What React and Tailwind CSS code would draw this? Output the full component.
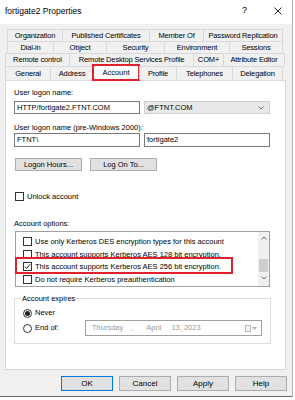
import React from 'react'

const tabRows = [
  { ml: 'ml-[7px]', h: 'h-[12px]', tabs: [['Organization', 'w-[55px]'], ['Published Certificates', 'w-[87px]'], ['Member Of', 'w-[54px]'], ['Password Replication', 'w-[80px]']] },
  { ml: 'ml-[7px]', h: 'h-[12px]', tabs: [['Dial-in', 'w-[46px]'], ['Object', 'w-[53px]'], ['Security', 'w-[58px]'], ['Environment', 'w-[65px]'], ['Sessions', 'w-[54px]']] },
  { ml: 'ml-[5px]', h: 'h-[13px]', tabs: [['Remote control', 'w-[64px]'], ['Remote Desktop Services Profile', 'w-[124px]'], ['COM+', 'w-[30px]'], ['Attribute Editor', 'w-[62px]']] },
]

const lastRow = [['General', 'w-[45px]'], ['Address', 'w-[43px]'], ['Account', 'w-[48px]'], ['Profile', 'w-[37px]'], ['Telephones', 'w-[56px]'], ['Delegation', 'w-[51px]']]

function Check({ checked }) {
  return (
    <span className="w-[9px] h-[9px] border border-[#333] bg-white flex items-center justify-center shrink-0">
      {checked && (
        <svg width="7" height="7" viewBox="0 0 7 7">
          <path d="M0.8 3.6 L2.7 5.4 L6.2 1.2" fill="none" stroke="#222" strokeWidth="1" />
        </svg>
      )}
    </span>
  )
}

function Radio({ on }) {
  return (
    <span className="w-[9px] h-[9px] rounded-full border border-[#333] bg-white flex items-center justify-center shrink-0">
      {on && <span className="w-[5px] h-[5px] rounded-full bg-[#222]" />}
    </span>
  )
}

export default function App() {
  return (
    <div className="w-[295px] h-[400px] bg-white overflow-hidden font-['Liberation_Sans',Arial,sans-serif] text-[7.5px] text-black">
      <div className="w-[293px] h-[397px] bg-[#f0f0f0] border-r border-b border-r-[#b4b4b4] border-b-[#6e6e6e] flex flex-col">

        {/* Title bar */}
        <div className="h-[24px] bg-white flex items-center shrink-0">
          <span className="ml-[5px] text-[8.5px] -mt-[2px]">fortigate2 Properties</span>
          <span className="ml-auto text-[9px] -mt-[2px]">?</span>
          <svg className="ml-[27px] mr-[10px] -mt-[2px]" width="8" height="8" viewBox="0 0 8 8">
            <path d="M0.5 0.5 L7.5 7.5 M7.5 0.5 L0.5 7.5" stroke="#111" strokeWidth="0.9" />
          </svg>
        </div>

        {/* Tabs */}
        <div className="mt-[5px] flex flex-col">
          {tabRows.map((row, i) => (
            <div key={i} className={`flex ${row.ml} ${row.h}`}>
              {row.tabs.map(([t, w]) => (
                <div key={t} className={`${w} h-full border-t border-l border-[#d9d9d9] last:border-r flex items-center justify-center whitespace-nowrap tracking-[-0.15px]`}>
                  {t}
                </div>
              ))}
            </div>
          ))}
          <div className="flex ml-[5px] h-[14px] relative z-10">
            {lastRow.map(([t, w]) =>
              t === 'Account' ? (
                <div key={t} className={`${w} h-[17px] -mt-[2px] -mx-px bg-white border-2 border-[#e0202a] flex items-center justify-center whitespace-nowrap`}>
                  {t}
                </div>
              ) : (
                <div key={t} className={`${w} h-full border-t border-l border-[#d9d9d9] last:border-r flex items-center justify-center whitespace-nowrap tracking-[-0.15px]`}>
                  {t}
                </div>
              )
            )}
          </div>
        </div>

        {/* Panel */}
        <div className="ml-[5px] w-[281px] h-[290px] bg-white border border-[#d9d9d9] flex flex-col pl-[8px] shrink-0">
          <div className="mt-[7px] h-[9px] leading-[9px]">User logon name:</div>
          <div className="mt-[4px] flex gap-[4px] h-[13px]">
            <div className="w-[126px] h-full border border-[#7a7a7a] flex items-center pl-[2px]">HTTP/fortigate2.FTNT.COM</div>
            <div className="w-[126px] h-full border border-[#cfcfcf] bg-[#e9e9e9] flex items-center pl-[2px]">
              <span>@FTNT.COM</span>
              <svg className="ml-auto mr-[5px]" width="6" height="4" viewBox="0 0 6 4">
                <path d="M0.5 0.5 L3 3 L5.5 0.5" fill="none" stroke="#555" strokeWidth="0.8" />
              </svg>
            </div>
          </div>
          <div className="mt-[9px] h-[9px] leading-[9px]">User logon name (pre-Windows 2000):</div>
          <div className="mt-[1px] flex gap-[4px] h-[14px]">
            <div className="w-[126px] h-full border border-[#7a7a7a] flex items-center pl-[2px]">FTNT\</div>
            <div className="w-[126px] h-full border border-[#7a7a7a] flex items-center pl-[2px]">fortigate2</div>
          </div>
          <div className="mt-[11px] flex gap-[8px] h-[13px] ml-[1px]">
            <div className="w-[67px] h-full bg-[#e1e1e1] border border-[#adadad] flex items-center justify-center">Logon Hours...</div>
            <div className="w-[67px] h-full bg-[#e1e1e1] border border-[#adadad] flex items-center justify-center">Log On To...</div>
          </div>

          <div className="mt-[21px] flex items-center gap-[3px] ml-[1px] h-[9px]">
            <Check />
            <span>Unlock account</span>
          </div>

          <div className="mt-[18px] h-[9px] leading-[9px]">Account options:</div>
          <div className="mt-[3px] w-[255px] h-[56px] border border-[#a0a0a0] ml-[1px] flex relative">
            <div className="flex-1 flex flex-col pt-[3px] pl-[7px]">
              {[
                ['Use only Kerberos DES encryption types for this account', false],
                ['This account supports Kerberos AES 128 bit encryption.', false],
                ['This account supports Kerberos AES 256 bit encryption.', true],
                ['Do not require Kerberos preauthentication', false],
              ].map(([t, c]) => (
                <div key={t} className="h-[13px] flex items-center gap-[3px] whitespace-nowrap">
                  <Check checked={c} />
                  <span>{t}</span>
                </div>
              ))}
            </div>
            <div className="w-[11px] bg-[#f0f0f0] flex flex-col items-center">
              <svg className="mt-[4px]" width="6" height="4" viewBox="0 0 6 4">
                <path d="M0.5 3.5 L3 1 L5.5 3.5" fill="none" stroke="#555" strokeWidth="0.9" />
              </svg>
              <div className="mt-[19px] w-[9px] h-[13px] bg-[#cdcdcd]" />
              <svg className="mt-[4px]" width="6" height="4" viewBox="0 0 6 4">
                <path d="M0.5 0.5 L3 3 L5.5 0.5" fill="none" stroke="#555" strokeWidth="0.9" />
              </svg>
            </div>
            <span className="absolute left-[-1px] top-[25px] w-[218px] h-[17px] border-2 border-[#e0202a] pointer-events-none" />
          </div>

          <fieldset className="mt-[7px] w-[257px] h-[50px] border border-[#dcdcdc] px-[8px]">
            <legend className="px-[1px] ml-[-2px] leading-[9px]">Account expires</legend>
            <div className="flex flex-col">
              <div className="mt-[5px] h-[10px] flex items-center gap-[3px]">
                <Radio on />
                <span>Never</span>
              </div>
              <div className="mt-[2px] h-[16px] flex items-center whitespace-nowrap">
                <Radio />
                <span className="w-[53px] pl-[3px] shrink-0">End of:</span>
                <div className="w-[177px] h-[16px] shrink-0 border border-[#a0a0a0] flex items-center text-[#9a9a9a] pl-[6px]">
                  <span>Thursday</span>
                  <span className="ml-[8px]">,</span>
                  <span className="ml-[13px]">April</span>
                  <span className="ml-[10px]">13, 2023</span>
                  <span className="ml-auto mr-[4px] flex items-center gap-[1px]">
                    <span className="w-[6px] h-[7px] border border-[#b8b8b8] bg-[#f4f4f4]" />
                    <svg width="5" height="3" viewBox="0 0 5 3"><path d="M0 0 L5 0 L2.5 3 Z" fill="#b0b0b0" /></svg>
                  </span>
                </div>
              </div>
            </div>
          </fieldset>
        </div>

        {/* Dialog buttons */}
        <div className="mt-[6px] flex justify-end gap-[6px] pr-[5px] h-[15px]">
          <div className="w-[52px] h-full bg-[#e1e1e1] border border-[#0078d7] flex items-center justify-center text-[8px]">OK</div>
          <div className="w-[52px] h-full bg-[#e1e1e1] border border-[#adadad] flex items-center justify-center text-[8px]">Cancel</div>
          <div className="w-[52px] h-full bg-[#e1e1e1] border border-[#adadad] flex items-center justify-center text-[8px]">Apply</div>
          <div className="w-[52px] h-full bg-[#e1e1e1] border border-[#adadad] flex items-center justify-center text-[8px]">Help</div>
        </div>
      </div>
    </div>
  )
}
